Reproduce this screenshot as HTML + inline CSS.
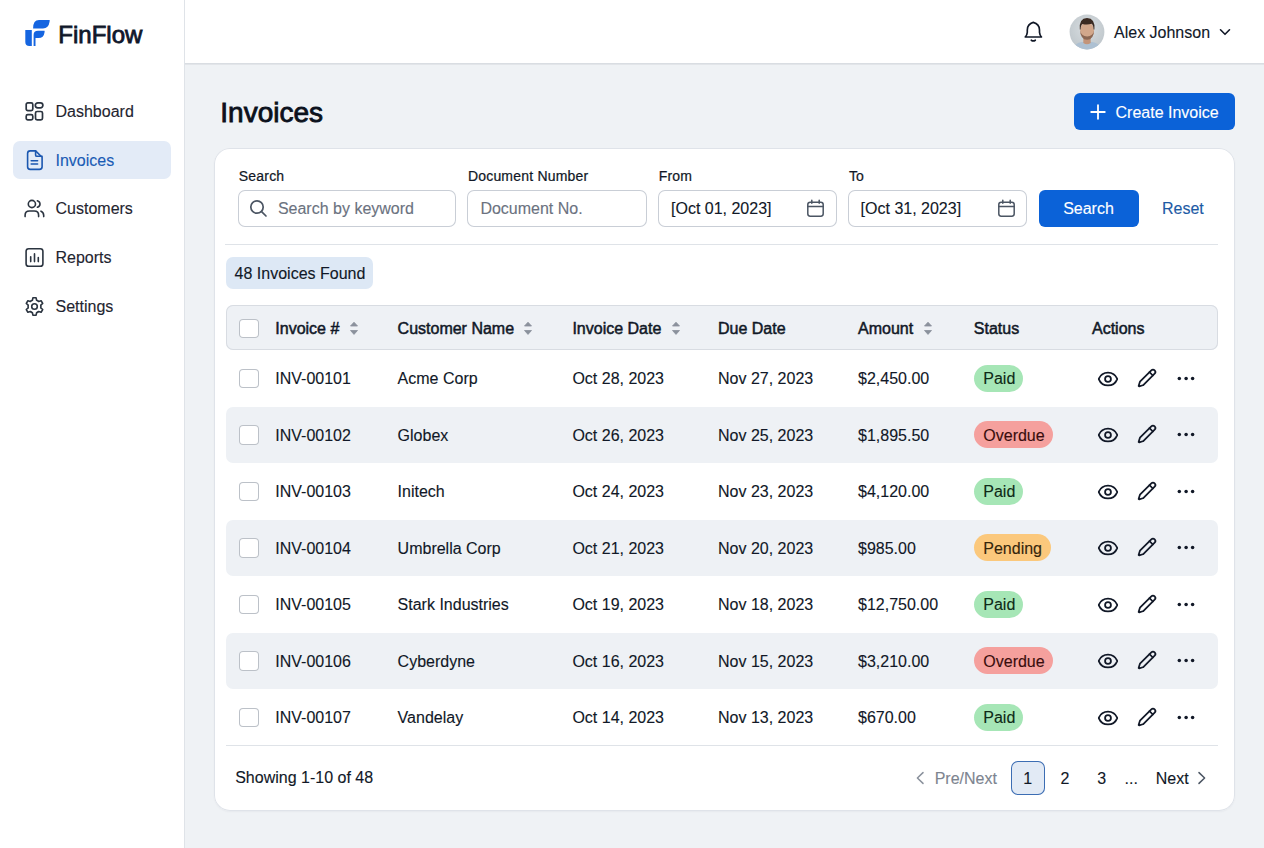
<!DOCTYPE html>
<html><head><meta charset="utf-8"><title>FinFlow Invoices</title>
<style>
html,body{margin:0;padding:0;}
body{width:1264px;height:848px;position:relative;overflow:hidden;background:#eff2f5;font-family:"Liberation Sans", sans-serif;}
.t{position:absolute;white-space:nowrap;-webkit-text-stroke:0.12px currentColor;}
.r{position:absolute;box-sizing:border-box;}
</style></head><body>
<div class="r" style="left:0px;top:0px;width:185px;height:848px;background:#ffffff;border-radius:0px;box-shadow:inset -1px 0 0 #dfe3e8;"></div>
<div class="r" style="left:185px;top:0px;width:1079px;height:65px;background:#ffffff;border-radius:0px;box-shadow:inset 0 -1px 0 #e2e5e9, inset 0 -2px 0 #d9dde2;"></div>
<svg class="r" style="left:24px;top:19px" width="28" height="28" viewBox="0 0 28 28">
<path d="M1.3 11 H7.8 V27 H5.3 Q1.3 27 1.3 23 Z" fill="#1565e0"/>
<path d="M9.1 9.4 Q9.1 1 15 1 H25.5 Q26 1 25.5 3 Q24.6 9.4 19 9.4 Z" fill="#1565e0"/>
<path d="M9.6 27 V16 Q9.6 11.8 14 11.8 H20.5 Q20.8 11.8 20.5 13.5 Q19.8 19 14.5 19 H11.5 V27 Z" fill="#1565e0"/>
</svg>
<div class="t" style="left:58.3px;top:20.88px;font-size:24px;line-height:28px;color:#0f172a;-webkit-text-stroke:0.8px #0f172a;">FinFlow</div>
<div class="r" style="left:13px;top:141px;width:158px;height:38px;background:#e3ebf7;border-radius:7px;"></div>
<svg class="r" style="left:24px;top:101px" width="21" height="20" viewBox="0 0 21 20" fill="none" stroke="#2b3440" stroke-width="1.7" stroke-linecap="round" stroke-linejoin="round"><rect x="2.2" y="1.8" width="6.6" height="7.8" rx="1.6"/>
<rect x="11.3" y="1.8" width="7.6" height="5" rx="2.5" ry="2.5"/>
<rect x="2.2" y="13.6" width="6.6" height="5.2" rx="1.6"/>
<rect x="11.5" y="10.5" width="7" height="8.3" rx="1.6"/></svg>
<div class="t" style="left:55.5px;top:101.55px;font-size:16px;line-height:20px;color:#1f2530;">Dashboard</div>
<svg class="r" style="left:25px;top:149px" width="19" height="22" viewBox="0 0 19 22" fill="none" stroke="#1b57b0" stroke-width="1.6" stroke-linecap="round" stroke-linejoin="round"><path d="M10.6 1.9 H5.2 Q2.6 1.9 2.6 4.5 V17.8 Q2.6 20.4 5.2 20.4 H14.5 Q17.1 20.4 17.1 17.8 V8.2 Z"/>
<path d="M10.6 1.9 V5.9 Q10.6 7.3 12 7.3 H17.1"/>
<path d="M6.2 11.7 H12.6 M6.2 15 H12.6"/></svg>
<div class="t" style="left:55.5px;top:150.55px;font-size:16px;line-height:20px;color:#1a5bb5;">Invoices</div>
<svg class="r" style="left:23px;top:199px" width="23" height="20" viewBox="0 0 23 20" fill="none" stroke="#2b3440" stroke-width="1.6" stroke-linecap="round" stroke-linejoin="round"><circle cx="8.9" cy="5" r="3.6"/>
<path d="M2.1 17.6 V16.2 Q2.1 12 6.4 12 H11.3 Q15.6 12 15.6 16.2 V17.6"/>
<path d="M14.4 1.8 Q17 2.7 17 5 Q17 7.5 14.4 8.3"/>
<path d="M18 12.2 Q20.5 13.2 20.7 16.2 V17.6"/></svg>
<div class="t" style="left:55.5px;top:199.05px;font-size:16px;line-height:20px;color:#1f2530;">Customers</div>
<svg class="r" style="left:24px;top:247px" width="21" height="21" viewBox="0 0 21 21" fill="none" stroke="#2b3440" stroke-width="1.6" stroke-linecap="round" stroke-linejoin="round"><rect x="2.1" y="1.7" width="16.8" height="17.6" rx="2.6"/>
<path d="M6.7 14.6 V9.7 M10.5 14.6 V6.9 M14.3 14.6 V10.6"/></svg>
<div class="t" style="left:55.5px;top:247.75px;font-size:16px;line-height:20px;color:#1f2530;">Reports</div>
<svg class="r" style="left:24px;top:295.5px" width="21" height="21" viewBox="0 0 21 21" fill="none" stroke="#2b3440" stroke-width="1.6" stroke-linecap="round" stroke-linejoin="round"><path d="M8.9 1.8 H12.1 L12.6 4.3 Q13.8 4.8 14.7 5.5 L17.1 4.7 L18.7 7.5 L16.8 9.2 Q17 10.5 16.8 11.8 L18.7 13.5 L17.1 16.3 L14.7 15.5 Q13.8 16.2 12.6 16.7 L12.1 19.2 H8.9 L8.4 16.7 Q7.2 16.2 6.3 15.5 L3.9 16.3 L2.3 13.5 L4.2 11.8 Q4 10.5 4.2 9.2 L2.3 7.5 L3.9 4.7 L6.3 5.5 Q7.2 4.8 8.4 4.3 Z"/>
<circle cx="10.5" cy="10.5" r="2.8"/></svg>
<div class="t" style="left:55.5px;top:296.65px;font-size:16px;line-height:20px;color:#1f2530;">Settings</div>
<svg class="r" style="left:1023px;top:20px" width="22" height="24" viewBox="0 0 22 24" fill="none" stroke="#111827" stroke-width="1.65" stroke-linecap="round" stroke-linejoin="round"><path d="M10.3 2.4 Q16.4 4 16.5 10 V12.4 Q16.7 15.2 18.5 17 H2.2 Q4.1 15.2 4.3 12.4 V10 Q4.4 4 10.3 2.4 Z"/>
<path d="M8.3 20.2 Q10.3 21.6 12.3 20.2"/></svg>
<svg class="r" style="left:1069px;top:14px" width="36" height="36" viewBox="0 0 36 36">
<defs><clipPath id="av"><circle cx="18" cy="18" r="17.4"/></clipPath>
<radialGradient id="avbg" cx="50%" cy="40%" r="65%"><stop offset="0" stop-color="#d9dee1"/><stop offset="1" stop-color="#bcc4c9"/></radialGradient></defs>
<g clip-path="url(#av)">
<rect width="36" height="36" fill="url(#avbg)"/>
<path d="M3 38 Q4 29.5 12.5 28 L23.5 28 Q32 29.5 33 38 Z" fill="#adc0d2"/>
<path d="M14.3 22 H21.7 V29 Q18 31.5 14.3 29 Z" fill="#c39479"/>
<ellipse cx="18.1" cy="16.8" rx="7" ry="8.8" fill="#d2a78b"/>
<path d="M11.1 16.5 Q11.5 25.6 18.1 25.8 Q24.7 25.6 25.1 16.5 Q24.2 22 18.1 22.4 Q12 22 11.1 16.5 Z" fill="#6e4c3c" opacity="0.7"/>
<path d="M10.8 15.5 Q9.8 4.2 18 3.9 Q26.4 4.2 25.4 15.5 L24.6 15.6 Q24.4 10.8 22.6 9.8 Q18 11.2 13.4 9.9 Q11.7 11 11.6 15.6 Z" fill="#3b2a21"/>
</g></svg>
<div class="t" style="left:1114px;top:22.85px;font-size:16px;line-height:20px;color:#111827;">Alex Johnson</div>
<svg class="r" style="left:1217px;top:26px" width="16" height="12" viewBox="0 0 16 12" fill="none" stroke="#111827" stroke-width="1.6" stroke-linecap="round" stroke-linejoin="round"><path d="M3.5 3.8 L8 8.3 L12.5 3.8"/></svg>
<div class="t" style="left:220.3px;top:95.99px;font-size:28px;line-height:33px;color:#0b111c;-webkit-text-stroke:0.85px #0b111c;">Invoices</div>
<div class="r" style="left:1074px;top:93px;width:161px;height:37px;background:#0b62d8;border-radius:6px;"></div>
<svg class="r" style="left:1090px;top:104px" width="16" height="16" viewBox="0 0 16 16" fill="none" stroke="#ffffff" stroke-width="1.8" stroke-linecap="round" stroke-linejoin="round"><path d="M8 1.2 V14.8 M1.2 8 H14.8"/></svg>
<div class="t" style="left:1115.5px;top:102.75px;font-size:16px;line-height:20px;color:#ffffff;">Create Invoice</div>
<div class="r" style="left:214px;top:148px;width:1021px;height:663px;background:#ffffff;border-radius:16px;box-shadow:inset 0 0 0 1px #dfe3e9, 0 1px 2px rgba(16,24,40,0.04);"></div>
<div class="t" style="left:238.8px;top:166.45px;font-size:14px;line-height:20px;color:#111827;letter-spacing:0.2px;-webkit-text-stroke:0.22px #111827;">Search</div>
<div class="t" style="left:467.9px;top:166.45px;font-size:14px;line-height:20px;color:#111827;letter-spacing:0.2px;-webkit-text-stroke:0.22px #111827;">Document Number</div>
<div class="t" style="left:658.7px;top:166.45px;font-size:14px;line-height:20px;color:#111827;letter-spacing:0.2px;-webkit-text-stroke:0.22px #111827;">From</div>
<div class="t" style="left:848.9px;top:166.45px;font-size:14px;line-height:20px;color:#111827;letter-spacing:0.2px;-webkit-text-stroke:0.22px #111827;">To</div>
<div class="r" style="left:238px;top:190px;width:218px;height:37px;background:#fff;border-radius:7px;box-shadow:inset 0 0 0 1px #c9ced6;"></div>
<svg class="r" style="left:249px;top:199px" width="19" height="19" viewBox="0 0 19 19" fill="none" stroke="#4b5563" stroke-width="1.7" stroke-linecap="round" stroke-linejoin="round"><circle cx="8" cy="8" r="6.2"/><path d="M12.6 12.6 L17 17"/></svg>
<div class="t" style="left:277.9px;top:199.35px;font-size:16px;line-height:20px;color:#6b7280;">Search by keyword</div>
<div class="r" style="left:467px;top:190px;width:180px;height:37px;background:#fff;border-radius:7px;box-shadow:inset 0 0 0 1px #c9ced6;"></div>
<div class="t" style="left:480.4px;top:199.35px;font-size:16px;line-height:20px;color:#6b7280;">Document No.</div>
<div class="r" style="left:658px;top:190px;width:179px;height:37px;background:#fff;border-radius:7px;box-shadow:inset 0 0 0 1px #c9ced6;"></div>
<div class="t" style="left:671px;top:199.35px;font-size:16px;line-height:20px;color:#111827;">[Oct 01, 2023]</div>
<svg class="r" style="left:806px;top:199px" width="19" height="19" viewBox="0 0 19 19" fill="none" stroke="#4b5563" stroke-width="1.5" stroke-linecap="round" stroke-linejoin="round"><rect x="1.8" y="3.2" width="15.4" height="14" rx="2.4"/><path d="M1.8 7.6 H17.2 M5.8 1.2 V4.2 M13.2 1.2 V4.2"/></svg>
<div class="r" style="left:848px;top:190px;width:179px;height:37px;background:#fff;border-radius:7px;box-shadow:inset 0 0 0 1px #c9ced6;"></div>
<div class="t" style="left:860.6px;top:199.35px;font-size:16px;line-height:20px;color:#111827;">[Oct 31, 2023]</div>
<svg class="r" style="left:997px;top:199px" width="19" height="19" viewBox="0 0 19 19" fill="none" stroke="#4b5563" stroke-width="1.5" stroke-linecap="round" stroke-linejoin="round"><rect x="1.8" y="3.2" width="15.4" height="14" rx="2.4"/><path d="M1.8 7.6 H17.2 M5.8 1.2 V4.2 M13.2 1.2 V4.2"/></svg>
<div class="r" style="left:1039px;top:190px;width:100px;height:37px;background:#0b62d8;border-radius:6px;"></div>
<div class="t" style="left:1038.5px;top:199.35px;font-size:16px;line-height:20px;color:#ffffff;width:100px;text-align:center;">Search</div>
<div class="t" style="left:1162px;top:199.35px;font-size:16px;line-height:20px;color:#1d5aa5;">Reset</div>
<div class="r" style="left:225px;top:244px;width:993px;height:1px;background:#dfe3e8;border-radius:0px;"></div>
<div class="r" style="left:226px;top:257px;width:147px;height:32px;background:#dde8f5;border-radius:7px;"></div>
<div class="t" style="left:234.6px;top:263.95px;font-size:16px;line-height:20px;color:#111827;">48 Invoices Found</div>
<div class="r" style="left:226px;top:305px;width:992px;height:45px;background:#eef1f5;border-radius:7px;box-shadow:inset 0 0 0 1px #d8dce2;"></div>
<div class="r" style="left:239px;top:318.5px;width:19.5px;height:19.5px;background:#fff;border-radius:4px;box-shadow:inset 0 0 0 1px #bcc1c8;"></div>
<div class="t" style="left:275.3px;top:318.85px;font-size:16px;line-height:20px;color:#111827;-webkit-text-stroke:0.5px #111827;">Invoice #</div>
<svg class="r" style="left:348.5px;top:321px" width="10" height="14" viewBox="0 0 10 14"><path d="M5 1.2 L8.5 5 H1.5 Z M5 13.4 L8.5 9.5 H1.5 Z" fill="#8a919c" stroke="#8a919c" stroke-width="0.8" stroke-linejoin="round"/></svg>
<div class="t" style="left:397.6px;top:318.85px;font-size:16px;line-height:20px;color:#111827;-webkit-text-stroke:0.5px #111827;">Customer Name</div>
<svg class="r" style="left:522.5px;top:321px" width="10" height="14" viewBox="0 0 10 14"><path d="M5 1.2 L8.5 5 H1.5 Z M5 13.4 L8.5 9.5 H1.5 Z" fill="#8a919c" stroke="#8a919c" stroke-width="0.8" stroke-linejoin="round"/></svg>
<div class="t" style="left:572.4px;top:318.85px;font-size:16px;line-height:20px;color:#111827;-webkit-text-stroke:0.5px #111827;">Invoice Date</div>
<svg class="r" style="left:670.5px;top:321px" width="10" height="14" viewBox="0 0 10 14"><path d="M5 1.2 L8.5 5 H1.5 Z M5 13.4 L8.5 9.5 H1.5 Z" fill="#8a919c" stroke="#8a919c" stroke-width="0.8" stroke-linejoin="round"/></svg>
<div class="t" style="left:718px;top:318.85px;font-size:16px;line-height:20px;color:#111827;-webkit-text-stroke:0.5px #111827;">Due Date</div>
<div class="t" style="left:858px;top:318.85px;font-size:16px;line-height:20px;color:#111827;-webkit-text-stroke:0.5px #111827;">Amount</div>
<svg class="r" style="left:923px;top:321px" width="10" height="14" viewBox="0 0 10 14"><path d="M5 1.2 L8.5 5 H1.5 Z M5 13.4 L8.5 9.5 H1.5 Z" fill="#8a919c" stroke="#8a919c" stroke-width="0.8" stroke-linejoin="round"/></svg>
<div class="t" style="left:973.8px;top:318.85px;font-size:16px;line-height:20px;color:#111827;-webkit-text-stroke:0.5px #111827;">Status</div>
<div class="t" style="left:1092px;top:318.85px;font-size:16px;line-height:20px;color:#111827;-webkit-text-stroke:0.5px #111827;">Actions</div>
<div class="r" style="left:239px;top:368.8px;width:19.5px;height:19.5px;background:#fff;border-radius:4px;box-shadow:inset 0 0 0 1px #bcc1c8;"></div>
<div class="t" style="left:275.3px;top:369.15px;font-size:16px;line-height:20px;color:#111827;">INV-00101</div>
<div class="t" style="left:397.6px;top:369.15px;font-size:16px;line-height:20px;color:#111827;">Acme Corp</div>
<div class="t" style="left:572.4px;top:369.15px;font-size:16px;line-height:20px;color:#111827;">Oct 28, 2023</div>
<div class="t" style="left:718px;top:369.15px;font-size:16px;line-height:20px;color:#111827;">Nov 27, 2023</div>
<div class="t" style="left:858px;top:369.15px;font-size:16px;line-height:20px;color:#111827;">$2,450.00</div>
<div class="r" style="left:973.5px;top:364.75px;width:49.5px;height:27px;background:#a6e6b6;border-radius:13.5px;"></div>
<div class="t" style="left:983.3px;top:369.15px;font-size:16px;line-height:20px;color:#0e2a17;">Paid</div>
<svg class="r" style="left:1096.5px;top:367.85px" width="22" height="22" viewBox="0 0 24 24" fill="none" stroke="#111827" stroke-width="1.95" stroke-linecap="round" stroke-linejoin="round"><path d="M2.062 12.348a1 1 0 0 1 0-.696 10.75 10.75 0 0 1 19.876 0 1 1 0 0 1 0 .696 10.75 10.75 0 0 1-19.876 0"/><circle cx="12" cy="12" r="3.2"/></svg>
<svg class="r" style="left:1136.8px;top:367.85px" width="20" height="20" viewBox="0 0 24 24" fill="none" stroke="#111827" stroke-width="2.1" stroke-linecap="round" stroke-linejoin="round"><path d="M21.174 6.812a1 1 0 0 0-3.986-3.987L3.842 16.174a2 2 0 0 0-.5.83l-1.321 4.352a.5.5 0 0 0 .623.622l4.353-1.32a2 2 0 0 0 .83-.497z"/><path d="m15 5 4 4"/></svg>
<svg class="r" style="left:1176px;top:374.75px" width="20" height="7" viewBox="0 0 20 7" fill="#111827" stroke="none" stroke-width="0" stroke-linecap="round" stroke-linejoin="round"><circle cx="3.3" cy="3.5" r="1.75"/><circle cx="10.1" cy="3.5" r="1.75"/><circle cx="16.6" cy="3.5" r="1.75"/></svg>
<div class="r" style="left:226px;top:406.5px;width:992px;height:56.0px;background:#eef1f5;border-radius:7px;"></div>
<div class="r" style="left:239px;top:425.2px;width:19.5px;height:19.5px;background:#fff;border-radius:4px;box-shadow:inset 0 0 0 1px #bcc1c8;"></div>
<div class="t" style="left:275.3px;top:425.65px;font-size:16px;line-height:20px;color:#111827;">INV-00102</div>
<div class="t" style="left:397.6px;top:425.65px;font-size:16px;line-height:20px;color:#111827;">Globex</div>
<div class="t" style="left:572.4px;top:425.65px;font-size:16px;line-height:20px;color:#111827;">Oct 26, 2023</div>
<div class="t" style="left:718px;top:425.65px;font-size:16px;line-height:20px;color:#111827;">Nov 25, 2023</div>
<div class="t" style="left:858px;top:425.65px;font-size:16px;line-height:20px;color:#111827;">$1,895.50</div>
<div class="r" style="left:973.5px;top:421.25px;width:79.5px;height:27px;background:#f5a09d;border-radius:13.5px;"></div>
<div class="t" style="left:983.3px;top:425.65px;font-size:16px;line-height:20px;color:#3a0d0d;">Overdue</div>
<svg class="r" style="left:1096.5px;top:424.35px" width="22" height="22" viewBox="0 0 24 24" fill="none" stroke="#111827" stroke-width="1.95" stroke-linecap="round" stroke-linejoin="round"><path d="M2.062 12.348a1 1 0 0 1 0-.696 10.75 10.75 0 0 1 19.876 0 1 1 0 0 1 0 .696 10.75 10.75 0 0 1-19.876 0"/><circle cx="12" cy="12" r="3.2"/></svg>
<svg class="r" style="left:1136.8px;top:424.35px" width="20" height="20" viewBox="0 0 24 24" fill="none" stroke="#111827" stroke-width="2.1" stroke-linecap="round" stroke-linejoin="round"><path d="M21.174 6.812a1 1 0 0 0-3.986-3.987L3.842 16.174a2 2 0 0 0-.5.83l-1.321 4.352a.5.5 0 0 0 .623.622l4.353-1.32a2 2 0 0 0 .83-.497z"/><path d="m15 5 4 4"/></svg>
<svg class="r" style="left:1176px;top:431.25px" width="20" height="7" viewBox="0 0 20 7" fill="#111827" stroke="none" stroke-width="0" stroke-linecap="round" stroke-linejoin="round"><circle cx="3.3" cy="3.5" r="1.75"/><circle cx="10.1" cy="3.5" r="1.75"/><circle cx="16.6" cy="3.5" r="1.75"/></svg>
<div class="r" style="left:239px;top:481.8px;width:19.5px;height:19.5px;background:#fff;border-radius:4px;box-shadow:inset 0 0 0 1px #bcc1c8;"></div>
<div class="t" style="left:275.3px;top:482.15px;font-size:16px;line-height:20px;color:#111827;">INV-00103</div>
<div class="t" style="left:397.6px;top:482.15px;font-size:16px;line-height:20px;color:#111827;">Initech</div>
<div class="t" style="left:572.4px;top:482.15px;font-size:16px;line-height:20px;color:#111827;">Oct 24, 2023</div>
<div class="t" style="left:718px;top:482.15px;font-size:16px;line-height:20px;color:#111827;">Nov 23, 2023</div>
<div class="t" style="left:858px;top:482.15px;font-size:16px;line-height:20px;color:#111827;">$4,120.00</div>
<div class="r" style="left:973.5px;top:477.75px;width:49.5px;height:27px;background:#a6e6b6;border-radius:13.5px;"></div>
<div class="t" style="left:983.3px;top:482.15px;font-size:16px;line-height:20px;color:#0e2a17;">Paid</div>
<svg class="r" style="left:1096.5px;top:480.85px" width="22" height="22" viewBox="0 0 24 24" fill="none" stroke="#111827" stroke-width="1.95" stroke-linecap="round" stroke-linejoin="round"><path d="M2.062 12.348a1 1 0 0 1 0-.696 10.75 10.75 0 0 1 19.876 0 1 1 0 0 1 0 .696 10.75 10.75 0 0 1-19.876 0"/><circle cx="12" cy="12" r="3.2"/></svg>
<svg class="r" style="left:1136.8px;top:480.85px" width="20" height="20" viewBox="0 0 24 24" fill="none" stroke="#111827" stroke-width="2.1" stroke-linecap="round" stroke-linejoin="round"><path d="M21.174 6.812a1 1 0 0 0-3.986-3.987L3.842 16.174a2 2 0 0 0-.5.83l-1.321 4.352a.5.5 0 0 0 .623.622l4.353-1.32a2 2 0 0 0 .83-.497z"/><path d="m15 5 4 4"/></svg>
<svg class="r" style="left:1176px;top:487.75px" width="20" height="7" viewBox="0 0 20 7" fill="#111827" stroke="none" stroke-width="0" stroke-linecap="round" stroke-linejoin="round"><circle cx="3.3" cy="3.5" r="1.75"/><circle cx="10.1" cy="3.5" r="1.75"/><circle cx="16.6" cy="3.5" r="1.75"/></svg>
<div class="r" style="left:226px;top:519.5px;width:992px;height:56.0px;background:#eef1f5;border-radius:7px;"></div>
<div class="r" style="left:239px;top:538.2px;width:19.5px;height:19.5px;background:#fff;border-radius:4px;box-shadow:inset 0 0 0 1px #bcc1c8;"></div>
<div class="t" style="left:275.3px;top:538.65px;font-size:16px;line-height:20px;color:#111827;">INV-00104</div>
<div class="t" style="left:397.6px;top:538.65px;font-size:16px;line-height:20px;color:#111827;">Umbrella Corp</div>
<div class="t" style="left:572.4px;top:538.65px;font-size:16px;line-height:20px;color:#111827;">Oct 21, 2023</div>
<div class="t" style="left:718px;top:538.65px;font-size:16px;line-height:20px;color:#111827;">Nov 20, 2023</div>
<div class="t" style="left:858px;top:538.65px;font-size:16px;line-height:20px;color:#111827;">$985.00</div>
<div class="r" style="left:973.5px;top:534.25px;width:77px;height:27px;background:#fbc87c;border-radius:13.5px;"></div>
<div class="t" style="left:983.3px;top:538.65px;font-size:16px;line-height:20px;color:#35260c;">Pending</div>
<svg class="r" style="left:1096.5px;top:537.35px" width="22" height="22" viewBox="0 0 24 24" fill="none" stroke="#111827" stroke-width="1.95" stroke-linecap="round" stroke-linejoin="round"><path d="M2.062 12.348a1 1 0 0 1 0-.696 10.75 10.75 0 0 1 19.876 0 1 1 0 0 1 0 .696 10.75 10.75 0 0 1-19.876 0"/><circle cx="12" cy="12" r="3.2"/></svg>
<svg class="r" style="left:1136.8px;top:537.35px" width="20" height="20" viewBox="0 0 24 24" fill="none" stroke="#111827" stroke-width="2.1" stroke-linecap="round" stroke-linejoin="round"><path d="M21.174 6.812a1 1 0 0 0-3.986-3.987L3.842 16.174a2 2 0 0 0-.5.83l-1.321 4.352a.5.5 0 0 0 .623.622l4.353-1.32a2 2 0 0 0 .83-.497z"/><path d="m15 5 4 4"/></svg>
<svg class="r" style="left:1176px;top:544.25px" width="20" height="7" viewBox="0 0 20 7" fill="#111827" stroke="none" stroke-width="0" stroke-linecap="round" stroke-linejoin="round"><circle cx="3.3" cy="3.5" r="1.75"/><circle cx="10.1" cy="3.5" r="1.75"/><circle cx="16.6" cy="3.5" r="1.75"/></svg>
<div class="r" style="left:239px;top:594.8px;width:19.5px;height:19.5px;background:#fff;border-radius:4px;box-shadow:inset 0 0 0 1px #bcc1c8;"></div>
<div class="t" style="left:275.3px;top:595.15px;font-size:16px;line-height:20px;color:#111827;">INV-00105</div>
<div class="t" style="left:397.6px;top:595.15px;font-size:16px;line-height:20px;color:#111827;">Stark Industries</div>
<div class="t" style="left:572.4px;top:595.15px;font-size:16px;line-height:20px;color:#111827;">Oct 19, 2023</div>
<div class="t" style="left:718px;top:595.15px;font-size:16px;line-height:20px;color:#111827;">Nov 18, 2023</div>
<div class="t" style="left:858px;top:595.15px;font-size:16px;line-height:20px;color:#111827;">$12,750.00</div>
<div class="r" style="left:973.5px;top:590.75px;width:49.5px;height:27px;background:#a6e6b6;border-radius:13.5px;"></div>
<div class="t" style="left:983.3px;top:595.15px;font-size:16px;line-height:20px;color:#0e2a17;">Paid</div>
<svg class="r" style="left:1096.5px;top:593.85px" width="22" height="22" viewBox="0 0 24 24" fill="none" stroke="#111827" stroke-width="1.95" stroke-linecap="round" stroke-linejoin="round"><path d="M2.062 12.348a1 1 0 0 1 0-.696 10.75 10.75 0 0 1 19.876 0 1 1 0 0 1 0 .696 10.75 10.75 0 0 1-19.876 0"/><circle cx="12" cy="12" r="3.2"/></svg>
<svg class="r" style="left:1136.8px;top:593.85px" width="20" height="20" viewBox="0 0 24 24" fill="none" stroke="#111827" stroke-width="2.1" stroke-linecap="round" stroke-linejoin="round"><path d="M21.174 6.812a1 1 0 0 0-3.986-3.987L3.842 16.174a2 2 0 0 0-.5.83l-1.321 4.352a.5.5 0 0 0 .623.622l4.353-1.32a2 2 0 0 0 .83-.497z"/><path d="m15 5 4 4"/></svg>
<svg class="r" style="left:1176px;top:600.75px" width="20" height="7" viewBox="0 0 20 7" fill="#111827" stroke="none" stroke-width="0" stroke-linecap="round" stroke-linejoin="round"><circle cx="3.3" cy="3.5" r="1.75"/><circle cx="10.1" cy="3.5" r="1.75"/><circle cx="16.6" cy="3.5" r="1.75"/></svg>
<div class="r" style="left:226px;top:632.5px;width:992px;height:56.0px;background:#eef1f5;border-radius:7px;"></div>
<div class="r" style="left:239px;top:651.2px;width:19.5px;height:19.5px;background:#fff;border-radius:4px;box-shadow:inset 0 0 0 1px #bcc1c8;"></div>
<div class="t" style="left:275.3px;top:651.65px;font-size:16px;line-height:20px;color:#111827;">INV-00106</div>
<div class="t" style="left:397.6px;top:651.65px;font-size:16px;line-height:20px;color:#111827;">Cyberdyne</div>
<div class="t" style="left:572.4px;top:651.65px;font-size:16px;line-height:20px;color:#111827;">Oct 16, 2023</div>
<div class="t" style="left:718px;top:651.65px;font-size:16px;line-height:20px;color:#111827;">Nov 15, 2023</div>
<div class="t" style="left:858px;top:651.65px;font-size:16px;line-height:20px;color:#111827;">$3,210.00</div>
<div class="r" style="left:973.5px;top:647.25px;width:79.5px;height:27px;background:#f5a09d;border-radius:13.5px;"></div>
<div class="t" style="left:983.3px;top:651.65px;font-size:16px;line-height:20px;color:#3a0d0d;">Overdue</div>
<svg class="r" style="left:1096.5px;top:650.35px" width="22" height="22" viewBox="0 0 24 24" fill="none" stroke="#111827" stroke-width="1.95" stroke-linecap="round" stroke-linejoin="round"><path d="M2.062 12.348a1 1 0 0 1 0-.696 10.75 10.75 0 0 1 19.876 0 1 1 0 0 1 0 .696 10.75 10.75 0 0 1-19.876 0"/><circle cx="12" cy="12" r="3.2"/></svg>
<svg class="r" style="left:1136.8px;top:650.35px" width="20" height="20" viewBox="0 0 24 24" fill="none" stroke="#111827" stroke-width="2.1" stroke-linecap="round" stroke-linejoin="round"><path d="M21.174 6.812a1 1 0 0 0-3.986-3.987L3.842 16.174a2 2 0 0 0-.5.83l-1.321 4.352a.5.5 0 0 0 .623.622l4.353-1.32a2 2 0 0 0 .83-.497z"/><path d="m15 5 4 4"/></svg>
<svg class="r" style="left:1176px;top:657.25px" width="20" height="7" viewBox="0 0 20 7" fill="#111827" stroke="none" stroke-width="0" stroke-linecap="round" stroke-linejoin="round"><circle cx="3.3" cy="3.5" r="1.75"/><circle cx="10.1" cy="3.5" r="1.75"/><circle cx="16.6" cy="3.5" r="1.75"/></svg>
<div class="r" style="left:239px;top:707.8px;width:19.5px;height:19.5px;background:#fff;border-radius:4px;box-shadow:inset 0 0 0 1px #bcc1c8;"></div>
<div class="t" style="left:275.3px;top:708.15px;font-size:16px;line-height:20px;color:#111827;">INV-00107</div>
<div class="t" style="left:397.6px;top:708.15px;font-size:16px;line-height:20px;color:#111827;">Vandelay</div>
<div class="t" style="left:572.4px;top:708.15px;font-size:16px;line-height:20px;color:#111827;">Oct 14, 2023</div>
<div class="t" style="left:718px;top:708.15px;font-size:16px;line-height:20px;color:#111827;">Nov 13, 2023</div>
<div class="t" style="left:858px;top:708.15px;font-size:16px;line-height:20px;color:#111827;">$670.00</div>
<div class="r" style="left:973.5px;top:703.75px;width:49.5px;height:27px;background:#a6e6b6;border-radius:13.5px;"></div>
<div class="t" style="left:983.3px;top:708.15px;font-size:16px;line-height:20px;color:#0e2a17;">Paid</div>
<svg class="r" style="left:1096.5px;top:706.85px" width="22" height="22" viewBox="0 0 24 24" fill="none" stroke="#111827" stroke-width="1.95" stroke-linecap="round" stroke-linejoin="round"><path d="M2.062 12.348a1 1 0 0 1 0-.696 10.75 10.75 0 0 1 19.876 0 1 1 0 0 1 0 .696 10.75 10.75 0 0 1-19.876 0"/><circle cx="12" cy="12" r="3.2"/></svg>
<svg class="r" style="left:1136.8px;top:706.85px" width="20" height="20" viewBox="0 0 24 24" fill="none" stroke="#111827" stroke-width="2.1" stroke-linecap="round" stroke-linejoin="round"><path d="M21.174 6.812a1 1 0 0 0-3.986-3.987L3.842 16.174a2 2 0 0 0-.5.83l-1.321 4.352a.5.5 0 0 0 .623.622l4.353-1.32a2 2 0 0 0 .83-.497z"/><path d="m15 5 4 4"/></svg>
<svg class="r" style="left:1176px;top:713.75px" width="20" height="7" viewBox="0 0 20 7" fill="#111827" stroke="none" stroke-width="0" stroke-linecap="round" stroke-linejoin="round"><circle cx="3.3" cy="3.5" r="1.75"/><circle cx="10.1" cy="3.5" r="1.75"/><circle cx="16.6" cy="3.5" r="1.75"/></svg>
<div class="r" style="left:226px;top:745px;width:992px;height:1px;background:#dfe3e8;border-radius:0px;"></div>
<div class="t" style="left:235.2px;top:768.35px;font-size:16px;line-height:20px;color:#111827;">Showing 1-10 of 48</div>
<svg class="r" style="left:914px;top:771px" width="12" height="14" viewBox="0 0 12 14" fill="none" stroke="#8a919c" stroke-width="1.5" stroke-linecap="round" stroke-linejoin="round"><path d="M9 1.6 L3.4 7 L9 12.4"/></svg>
<div class="t" style="left:934.7px;top:768.65px;font-size:16px;line-height:20px;color:#7d8490;">Pre/Next</div>
<div class="r" style="left:1011px;top:761px;width:34px;height:34px;background:#e2eaf5;border-radius:7px;box-shadow:inset 0 0 0 1px #3c6db3;"></div>
<div class="t" style="left:1012.8px;top:768.65px;font-size:16px;line-height:20px;color:#111827;width:30px;text-align:center;">1</div>
<div class="t" style="left:1050.0px;top:768.65px;font-size:16px;line-height:20px;color:#111827;width:30px;text-align:center;">2</div>
<div class="t" style="left:1086.8px;top:768.65px;font-size:16px;line-height:20px;color:#111827;width:30px;text-align:center;">3</div>
<div class="t" style="left:1124.5px;top:768.65px;font-size:16px;line-height:20px;color:#111827;">...</div>
<div class="t" style="left:1155.7px;top:768.65px;font-size:16px;line-height:20px;color:#111827;">Next</div>
<svg class="r" style="left:1196px;top:771px" width="12" height="14" viewBox="0 0 12 14" fill="none" stroke="#4b5563" stroke-width="1.5" stroke-linecap="round" stroke-linejoin="round"><path d="M3 1.6 L8.6 7 L3 12.4"/></svg>
</body></html>
